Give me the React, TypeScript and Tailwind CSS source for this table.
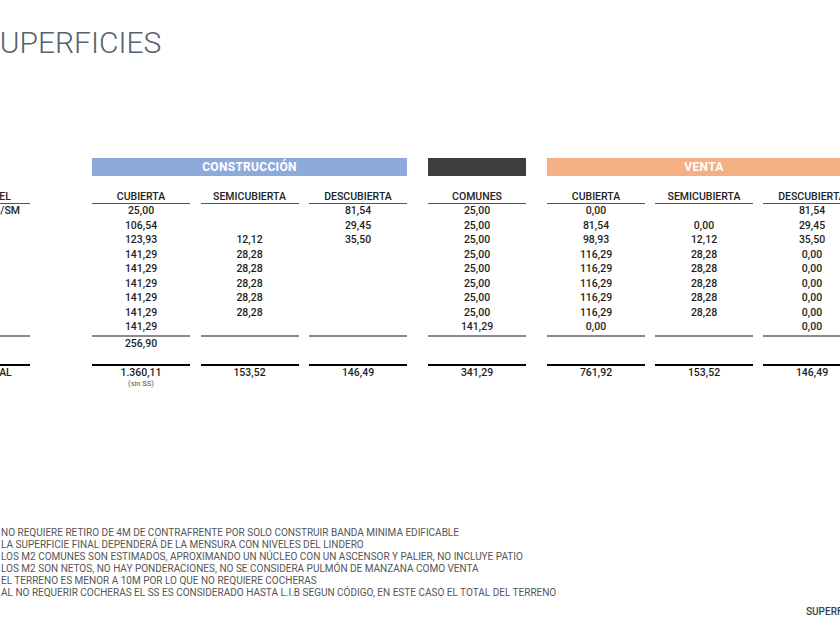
import React from "react";

type Col = {
  title: string;
  rows: string[];
  extra?: string;
  total?: string;
  note?: string;
};

const construccion: Col[] = [
  {
    title: "CUBIERTA",
    rows: ["25,00", "106,54", "123,93", "141,29", "141,29", "141,29", "141,29", "141,29", "141,29"],
    extra: "256,90",
    total: "1.360,11",
    note: "(sin SS)",
  },
  {
    title: "SEMICUBIERTA",
    rows: ["", "", "12,12", "28,28", "28,28", "28,28", "28,28", "28,28", ""],
    total: "153,52",
  },
  {
    title: "DESCUBIERTA",
    rows: ["81,54", "29,45", "35,50", "", "", "", "", "", ""],
    total: "146,49",
  },
];

const comunes: Col = {
  title: "COMUNES",
  rows: ["25,00", "25,00", "25,00", "25,00", "25,00", "25,00", "25,00", "25,00", "141,29"],
  total: "341,29",
};

const venta: Col[] = [
  {
    title: "CUBIERTA",
    rows: ["0,00", "81,54", "98,93", "116,29", "116,29", "116,29", "116,29", "116,29", "0,00"],
    total: "761,92",
  },
  {
    title: "SEMICUBIERTA",
    rows: ["", "0,00", "12,12", "28,28", "28,28", "28,28", "28,28", "28,28", ""],
    total: "153,52",
  },
  {
    title: "DESCUBIERTA",
    rows: ["81,54", "29,45", "35,50", "0,00", "0,00", "0,00", "0,00", "0,00", "0,00"],
    total: "146,49",
  },
];

const niveles = ["PB/SM", "1°", "2°", "3°", "4°", "5°", "6°", "7°", "8°"];

const notas = [
  "NO REQUIERE RETIRO DE 4M DE CONTRAFRENTE POR SOLO CONSTRUIR BANDA MINIMA EDIFICABLE",
  "LA SUPERFICIE FINAL DEPENDERÁ DE LA MENSURA CON NIVELES DEL LINDERO",
  "LOS M2 COMUNES SON ESTIMADOS, APROXIMANDO UN NÚCLEO CON UN ASCENSOR Y PALIER, NO INCLUYE PATIO",
  "LOS M2 SON NETOS, NO HAY PONDERACIONES, NO SE CONSIDERA PULMÓN DE MANZANA COMO VENTA",
  "EL TERRENO ES MENOR A 10M POR LO QUE NO REQUIERE COCHERAS",
  "AL NO REQUERIR COCHERAS EL SS ES CONSIDERADO HASTA L.I.B SEGUN CÓDIGO, EN ESTE CASO EL TOTAL DEL TERRENO",
];

function DataColumn({ col }: { col: Col }) {
  return (
    <div className="w-[98px] shrink-0 flex flex-col text-center">
      <div className="h-[28px] flex items-end justify-center pb-[1px] border-b border-[#555] text-[10.5px] leading-none font-medium text-[#222] whitespace-nowrap">
        {col.title}
      </div>
      {col.rows.map((r, i) => (
        <div key={i} className="h-[14.5px] flex items-center justify-center text-[10.5px] font-medium text-[#1e1e1e]">
          {r}
        </div>
      ))}
      <div className="h-[2px] bg-[#8a8a8a]" />
      <div className="h-[14px] flex items-center justify-center text-[10.5px] font-medium text-[#1e1e1e]">
        {col.extra}
      </div>
      <div className="h-[13px]" />
      <div className="h-[2px] bg-black" />
      <div className="h-[14px] flex items-center justify-center text-[10.5px] font-medium text-[#1e1e1e]">
        {col.total}
      </div>
      <div className="h-[9px] flex items-center justify-center text-[7.5px] text-[#555]">
        {col.note}
      </div>
    </div>
  );
}

export default function App() {
  return (
    <div
      className="w-[840px] h-[630px] overflow-hidden bg-white"
      style={{ fontFamily: "Roboto, 'Noto Sans', sans-serif" }}
    >
      <h1 className="mt-[28px] -ml-[18px] text-[30px] leading-none font-light text-[#56626e] whitespace-nowrap">
        SUPERFICIES
      </h1>

      <div className="mt-[100px] -ml-[70px] flex items-start w-max">
        {/* nivel */}
        <div className="w-[100px] shrink-0 flex flex-col">
          <div className="h-[18px]" />
          <div className="h-[28px] flex items-end pl-[52px] pb-[1px] border-b border-[#555] text-[10.5px] leading-none font-medium text-[#222]">
            NIVEL
          </div>
          {niveles.map((n, i) => (
            <div key={i} className={`h-[14.5px] flex items-center text-[10.5px] font-medium text-[#1e1e1e] ${i === 0 ? "pl-[57px]" : "pl-[52px]"}`}>
              {n}
            </div>
          ))}
          <div className="h-[2px] bg-[#8a8a8a]" />
          <div className="h-[27px]" />
          <div className="h-[2px] bg-black" />
          <div className="h-[14px] flex items-center pl-[50px] text-[10.5px] font-medium text-[#1e1e1e]">
            TOTAL
          </div>
        </div>

        <div className="ml-[62px] shrink-0 flex flex-col">
          <div className="h-[18px] bg-[#8eaadb] flex items-center justify-center text-white text-[12px] font-bold tracking-[0.3px]">
            CONSTRUCCIÓN
          </div>
          <div className="flex gap-[10.5px]">
            {construccion.map((c, i) => (
              <DataColumn key={i} col={c} />
            ))}
          </div>
        </div>

        <div className="ml-[21px] shrink-0 flex flex-col">
          <div className="h-[18px] bg-[#3d3d3d]" />
          <DataColumn col={comunes} />
        </div>

        <div className="ml-[21px] shrink-0 flex flex-col">
          <div className="h-[18px] bg-[#f4b084] flex items-center justify-center text-white text-[12px] font-bold tracking-[0.3px]">
            VENTA
          </div>
          <div className="flex gap-[10px]">
            {venta.map((c, i) => (
              <DataColumn key={i} col={c} />
            ))}
          </div>
        </div>
      </div>

      <div className="mt-[138px] ml-[1px] flex flex-col text-[10px] leading-[12px] text-[#555] whitespace-nowrap">
        {notas.map((n, i) => (
          <p key={i}>{n}</p>
        ))}
      </div>

      <div className="mt-[7px] pl-[806px] whitespace-nowrap text-[10px] leading-[12px] font-medium text-[#3a4148]">
        SUPERFICIES
      </div>
    </div>
  );
}
